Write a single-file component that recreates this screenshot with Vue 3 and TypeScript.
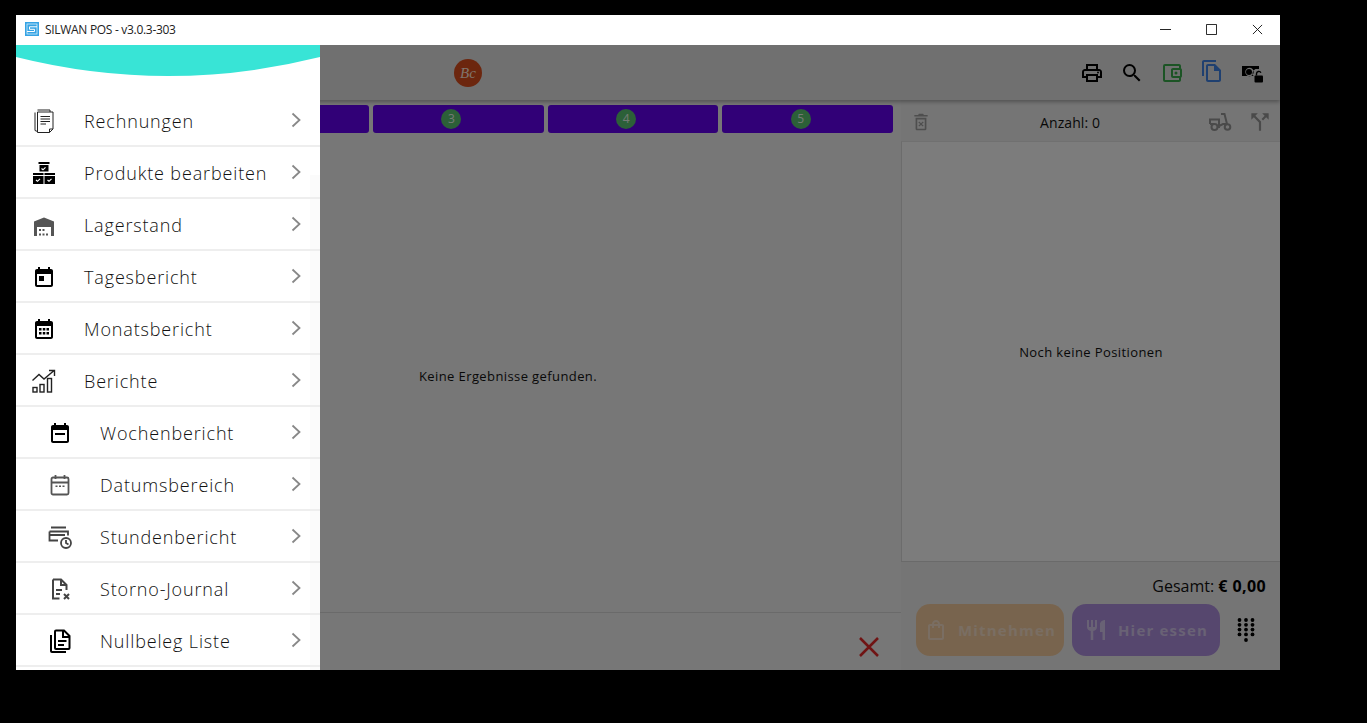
<template>
  <div class="screen">
    <div class="window">
      <!-- Titelleiste -->
      <div class="titlebar">
        <svg class="app-icon" viewBox="0 0 14 14">
          <rect width="14" height="14" fill="#35a3e4" />
          <rect x="2" y="2" width="10" height="10" fill="none" stroke="#d5eefb" stroke-width=".8" />
          <path d="M12 4.800H4.500v2.500h5v2.200H2" fill="none" stroke="#fff" stroke-width="1" />
        </svg>
        <span class="app-title">SILWAN POS - v3.0.3-303</span>
        <div class="win-controls">
          <svg viewBox="0 0 12 12"><path d="M0 6h12" /></svg>
          <svg viewBox="0 0 12 12"><path d="M.5.5h11v11H.5z" /></svg>
          <svg viewBox="0 0 12 12"><path d="m1 1 10 10M11 1 1 11" /></svg>
        </div>
      </div>

      <div class="app">
        <header class="app-header">
          <div class="logo-slot">
            <div class="logo"><span>Bc</span></div>
          </div>
          <div class="header-icons">
            <svg class="ico-24" viewBox="0 0 24 24"><path fill="#000" d="M19 8h-1V3H6v5H5c-1.66 0-3 1.34-3 3v6h4v4h12v-4h4v-6c0-1.66-1.34-3-3-3zM8 5h8v3H8V5zm8 12v2H8v-4h8v2zm2-2v-2H6v2H4v-4c0-.55.45-1 1-1h14c.55 0 1 .45 1 1v4h-2z" /><circle fill="#000" cx="18" cy="11.500" r="1" /></svg>
            <svg class="ico-24" viewBox="0 0 24 24"><path fill="#000" d="M15.500 14h-.79l-.28-.27A6.470 6.470 0 0 0 16 9.500 6.500 6.500 0 1 0 9.500 16c1.610 0 3.090-.59 4.230-1.570l.27.28v.79l5 4.990L20.490 19l-4.990-5zm-6 0C7.010 14 5 11.990 5 9.500S7.010 5 9.500 5 14 7.010 14 9.500 11.990 14 9.500 14z" /></svg>
            <svg class="ico-24" viewBox="0 0 24 24"><path fill="#38a84a" d="M21 7.280V5c0-1.100-.9-2-2-2H5a2 2 0 0 0-2 2v14a2 2 0 0 0 2 2h14c1.100 0 2-.9 2-2v-2.280A2 2 0 0 0 22 15V9a2 2 0 0 0-1-1.720zM20 9v6h-7V9h7zM5 19V5h14v2h-6c-1.100 0-2 .9-2 2v6c0 1.100.9 2 2 2h6v2H5z" /><circle fill="#38a84a" cx="16" cy="12" r="1.500" /></svg>
            <svg class="ico-24 ico-copy" viewBox="0 0 24 24"><path fill="#3f80e0" d="M16 1H4c-1.100 0-2 .9-2 2v14h2V3h12V1zm-1 4 6 6v10c0 1.100-.9 2-2 2H8c-1.100 0-2-.9-2-2V7c0-1.100.9-2 2-2h7zm-1 2H8v14h11V12h-5V7z" /></svg>
            <svg class="ico-24" viewBox="0 0 24 24">
              <path fill="#000" fill-rule="evenodd" d="M2 5h17v3h-3.500a4.500 4.500 0 0 0-2 7H2V5zm7.500 1.800a4.200 4.200 0 1 0 0 8.400 4.200 4.200 0 0 0 0-8.400z" />
              <circle fill="#000" cx="9" cy="11" r="3" />
              <rect fill="#000" x="14.500" y="14.500" width="8.500" height="7" rx="1" />
              <path fill="none" stroke="#000" stroke-width="1.400" d="M16.500 14.500v-1.800a2.300 2.300 0 0 1 4.400-.9" />
            </svg>
          </div>
        </header>

        <div class="columns">
          <section class="left">
            <div class="tabs">
              <div v-for="n in 5" :key="n" class="tab"><span class="badge">{{ n }}</span></div>
            </div>
            <div class="results">
              <div class="categories"></div>
              <div class="result-empty">Keine Ergebnisse gefunden.</div>
            </div>
            <div class="left-foot">
              <svg class="clear-x" viewBox="0 0 20 20"><path d="m1 1 18 18M19 1 1 19" /></svg>
            </div>
          </section>

          <section class="right">
            <div class="order-bar">
              <svg class="ico-trash" viewBox="0 0 24 24"><path fill="#9c9c9c" d="M15.500 3.500 14.500 2h-5l-1 1.500H4v2h16v-2h-4.500zM5.500 7v13c0 1.100.9 2 2 2h9c1.100 0 2-.9 2-2V7h-13zm2 2h9v11h-9V9zm2.300 2.500-1 1 2.200 2-2.200 2 1 1 2.200-2 2.200 2 1-1-2.200-2 2.200-2-1-1-2.200 2-2.200-2z" /></svg>
              <span class="count">Anzahl: 0</span>
              <svg class="ico-scooter" viewBox="0 0 24 24"><g fill="none" stroke="#949494" stroke-width="2"><circle cx="6.500" cy="17" r="3" /><circle cx="19.500" cy="17" r="2.800" /><path d="M2 14V9.500h9V17H9.500M2 14h4M13 4h3.500l2.500 10M11 16l4-2h4" /></g></svg>
              <svg class="ico-split" viewBox="0 0 24 24"><path fill="#949494" d="M14 4l2.290 2.290-2.880 2.880 1.420 1.420 2.880-2.880L20 10V4h-6zm-4 0H4v6l2.290-2.290 4.710 4.700V20h2v-8.410l-5.290-5.300L10 4z" /></svg>
            </div>
            <div class="positions">Noch keine Positionen</div>
            <div class="totals">
              <div class="sum">Gesamt: <b>€ 0,00</b></div>
              <div class="actions">
                <div class="action orange">
                  <svg viewBox="0 0 24 24"><path fill="currentColor" d="M18 6h-2c0-2.210-1.790-4-4-4S8 3.790 8 6H6c-1.100 0-2 .9-2 2v12c0 1.100.9 2 2 2h12c1.100 0 2-.9 2-2V8c0-1.100-.9-2-2-2zm-6-2c1.100 0 2 .9 2 2h-4c0-1.100.9-2 2-2zm6 16H6V8h2v2h2V8h4v2h2V8h2v12z" /></svg>
                  <span>Mitnehmen</span>
                </div>
                <div class="action purple">
                  <svg viewBox="0 0 24 24"><path fill="currentColor" d="M11 9H9V2H7v7H5V2H3v7c0 2.120 1.660 3.840 3.750 3.970V22h2.500v-9.030C11.340 12.840 13 11.120 13 9V2h-2v7zm5-3v8h2.500v8H21V2c-2.760 0-5 2.240-5 4z" /></svg>
                  <span>Hier essen</span>
                </div>
                <svg class="dialpad" viewBox="0 0 18 24">
                  <circle v-for="d in dialDots" :key="d.key" :cx="d.x" :cy="d.y" r="1.900" fill="#000" />
                </svg>
              </div>
            </div>
          </section>
        </div>

        <!-- Abdunkelung und Seitenmenü -->
        <div class="scrim"></div>
        <aside class="drawer">
          <svg class="wave" viewBox="0 0 304 32" preserveAspectRatio="none">
            <path d="M0 0h304v12Q152 50 0 12z" fill="#38e4d6" />
          </svg>
          <div class="drawer-track"></div>
          <nav class="menu">
            <div v-for="item in menu" :key="item.label" class="menu-row" :class="{ sub: item.sub }">
              <svg class="menu-icon" viewBox="0 0 24 24" v-html="item.icon"></svg>
              <span class="menu-label">{{ item.label }}</span>
              <svg class="chevron" viewBox="0 0 10 16"><path d="m1.500 1.500 7 6.500-7 6.500" /></svg>
            </div>
            <div class="menu-row"></div>
          </nav>
        </aside>
      </div>
    </div>
  </div>
</template>

<script setup lang="ts">
interface MenuItem {
  label: string
  icon: string
  sub?: boolean
}

const dialDots = Array.from({ length: 13 }, (_, i) => ({
  key: i,
  x: i === 12 ? 9 : 2.500 + (i % 3) * 6.500,
  y: i === 12 ? 22 : 2 + Math.floor(i / 3) * 4.800,
}))

const calendarBase =
  'M19 4h-1V2h-2v2H8V2H6v2H5C3.900 4 3 4.900 3 6v14c0 1.100.9 2 2 2h14c1.100 0 2-.9 2-2V6c0-1.100-.9-2-2-2zm0 16H5V9h14v11z'

const menu: MenuItem[] = [
  {
    label: 'Rechnungen',
    icon: '<g fill="none" stroke="#222" stroke-width="1"><path d="M5.500 1H18v2M3 3.500V21.500l2.500 1"/><path d="M5.500 3H21v17L17.500 23.500H5.500z"/><path d="M8.500 7.500H18M8.500 10H18M8.500 12.500H18M8.500 15h5.500" /><path d="M21 20h-3.500v3.500" /></g>',
  },
  {
    label: 'Produkte bearbeiten',
    icon: '<path fill="#000" d="M6.500 1h11v2h-11zM7.500 4h9v6.500h-9zM1 12h10.500v2H1zM12.500 12h10.500v2H12.500zM1 15h10.500v8H1zM12.500 15h10.500v8H12.500z"/><path fill="none" stroke="#fff" stroke-width="1.200" d="m9.500 7.500 1.500 1.300 2.500-2.500M4 19l1.500 1.300 2.500-2.500M15.500 19l1.500 1.300 2.500-2.500"/>',
  },
  {
    label: 'Lagerstand',
    icon: '<path fill="#555" d="M12 4.500 2 8.500V23h3V14h14v9h3V8.500z"/><path fill="#555" d="M7 16h2v2H7zM10.500 16h2v2h-2zM7 20.500h2v2H7zM10.500 20.500h2v2h-2zM14 20.500h2v2h-2z"/>',
  },
  {
    label: 'Tagesbericht',
    icon: `<path fill="#000" d="${calendarBase}"/><path fill="#000" d="M7 11h5v5H7z"/>`,
  },
  {
    label: 'Monatsbericht',
    icon: `<path fill="#000" d="${calendarBase}"/><path fill="#000" d="M7 11h2.500v2.500H7zM10.800 11h2.500v2.500h-2.500zM14.500 11H17v2.500h-2.500zM7 15h2.500v2.500H7zM10.800 15h2.500v2.500h-2.500zM14.500 15H17v2.500h-2.500z"/>`,
  },
  {
    label: 'Berichte',
    icon: '<g fill="none" stroke="#222" stroke-width="1.400"><path d="M.5 11.500 7 5.500l5 4.500L21.500 2M17 1.500h5.500V7" /><rect x="1" y="18.500" width="4" height="4.500"/><rect x="8" y="15.500" width="4" height="7.500"/><rect x="15.500" y="9.500" width="4" height="13.500" /></g>',
  },
  {
    label: 'Wochenbericht',
    sub: true,
    icon: `<path fill="#000" d="${calendarBase}"/><path fill="#000" d="M7 12h10v2H7z"/>`,
  },
  {
    label: 'Datumsbereich',
    sub: true,
    icon: '<g fill="none" stroke="#555" stroke-width="1.800"><rect x="3.500" y="4.500" width="17" height="17" rx="1.500"/><path d="M3.500 9.500h17M7.500 2v4M16.500 2v4"/></g><path fill="#555" d="M7.500 12.500h2v1.500h-2zM11 12.500h2v1.500h-2zM14.500 12.500h2v1.500h-2z"/>',
  },
  {
    label: 'Stundenbericht',
    sub: true,
    icon: '<g fill="none" stroke="#444" stroke-width="1.800"><path d="M3 2.500h15M1.500 6.500H20v4M1.500 6.500v9H10M1.500 10H17"/><circle cx="18" cy="18" r="5"/><path d="M18 15v3l2.500 1.500"/></g>',
  },
  {
    label: 'Storno-Journal',
    sub: true,
    icon: '<path fill="none" stroke="#444" stroke-width="2" d="M5 2.500h8l5.500 5.500v5M5 2.500v19h6.500M13 2.500V8h5.500M8 13h6M8 17h4"/><path fill="none" stroke="#444" stroke-width="2" d="m16 17 5 5M21 17l-5 5"/>',
  },
  {
    label: 'Nullbeleg Liste',
    sub: true,
    icon: '<path fill="#000" d="M2 6h2v16h14v2H4a2 2 0 0 1-2-2z"/><path fill="none" stroke="#000" stroke-width="2" d="M8 1.500h8l5.500 5.500v12a1 1 0 0 1-1 1H8a1 1 0 0 1-1-1V2.500a1 1 0 0 1 1-1zM10 12h8.500M10 16h6M15 1.500V8h6.500"/>',
  },
]
</script>

<style>
html,
body {
  margin: 0;
  background: #000;
}
</style>

<style scoped>
.screen {
  width: 1367px;
  height: 723px;
  box-sizing: border-box;
  padding: 15px 0 0 16px;
  background: #000;
  overflow: hidden;
  font-family: "Open Sans", "Noto Sans", sans-serif;
}

.window {
  width: 1264px;
  height: 655px;
  display: flex;
  flex-direction: column;
  background: #fff;
}

.titlebar {
  height: 30px;
  flex: none;
  box-sizing: border-box;
  padding: 0 0 2px 9px;
  display: flex;
  align-items: center;
  background: #fff;
}

.app-icon {
  width: 14px;
  height: 14px;
  margin-right: 6px;
}

.app-title {
  font-size: 12px;
  letter-spacing: -0.3px;
  color: #222;
}

.win-controls {
  margin-left: auto;
  display: flex;
  height: 100%;
  align-items: center;
  gap: 35px;
  padding-right: 17px;
}

.win-controls svg {
  width: 11px;
  height: 11px;
  fill: none;
  stroke: #111;
  stroke-width: 1;
}

.app {
  position: relative;
  flex: 1;
  min-height: 0;
  display: flex;
  flex-direction: column;
  background: #f6f6f6;
  overflow: hidden;
}

.app-header {
  height: 55px;
  flex: none;
  display: flex;
  align-items: center;
  background: #e0e0e0;
  box-shadow: 0 2px 4px rgba(0, 0, 0, 0.3);
  position: relative;
  z-index: 1;
}

.logo-slot {
  margin-left: 438px;
  margin-top: 1px;
}

.logo {
  width: 28px;
  height: 28px;
  border-radius: 50%;
  background: #d84c1c;
  display: flex;
  align-items: center;
  justify-content: center;
}

.logo span {
  font-family: "Liberation Serif", serif;
  font-style: italic;
  font-size: 15px;
  color: #ffe8da;
}

.header-icons {
  margin-left: auto;
  display: flex;
  align-items: center;
  gap: 16px;
  padding-right: 16px;
}

.ico-24 {
  width: 24px;
  height: 24px;
}

.ico-copy {
  margin-top: -3px;
}

.columns {
  flex: 1;
  min-height: 0;
  display: flex;
}

.left {
  width: 885px;
  flex: none;
  display: flex;
  flex-direction: column;
  background: #eeeeee;
}

.tabs {
  display: flex;
  gap: 4px;
  padding: 5px 8px 0;
}

.tab {
  flex: 1;
  height: 28px;
  box-sizing: border-box;
  padding-right: 14px;
  border-radius: 3px;
  background: #6200ee;
  display: flex;
  align-items: center;
  justify-content: center;
}

.badge {
  width: 20px;
  height: 20px;
  border-radius: 50%;
  background: #58c070;
  color: #e8f5ea;
  font-size: 12px;
  line-height: 20px;
  text-align: center;
}

.results {
  flex: 1;
  min-height: 0;
  display: flex;
  margin-top: 4px;
  border-bottom: 1px solid #d4d4d4;
}

.categories {
  width: 99px;
  flex: none;
}

.result-empty {
  flex: 1;
  display: flex;
  align-items: center;
  justify-content: center;
  padding-top: 3px;
  font-size: 13px;
  letter-spacing: 0.4px;
  color: #111;
}

.left-foot {
  height: 57px;
  flex: none;
  display: flex;
  justify-content: flex-end;
  align-items: flex-start;
  padding: 24px 22px 0 0;
  box-sizing: border-box;
}

.clear-x {
  width: 20px;
  height: 20px;
  fill: none;
  stroke: #e02828;
  stroke-width: 2.500;
}

.right {
  flex: 1;
  min-width: 0;
  display: flex;
  flex-direction: column;
  background: #ebebeb;
}

.order-bar {
  height: 41px;
  flex: none;
  box-sizing: border-box;
  padding-top: 3px;
  display: flex;
  align-items: center;
}

.ico-trash {
  width: 20px;
  height: 20px;
  margin-left: 10px;
}

.count {
  margin-left: 109px;
  font-size: 14px;
  letter-spacing: 0.1px;
  color: #111;
}

.ico-scooter {
  width: 24px;
  height: 24px;
  margin-left: 108px;
}

.ico-split {
  width: 26px;
  height: 26px;
  margin-left: 15px;
}

.positions {
  flex: 1;
  min-height: 0;
  display: flex;
  align-items: center;
  justify-content: center;
  border-left: 1px solid #d8d8d8;
  border-top: 1px solid #e0e0e0;
  font-size: 13px;
  letter-spacing: 0.4px;
  color: #111;
  background: #f8f8f8;
}

.totals {
  height: 109px;
  flex: none;
  box-sizing: border-box;
  border-top: 1px solid #d4d4d4;
  padding: 13px 14px 0 15px;
}

.sum {
  text-align: right;
  font-size: 16px;
  line-height: 22px;
  color: #111;
}

.sum b {
  color: #000;
  letter-spacing: 0.4px;
}

.actions {
  margin-top: 7px;
  display: flex;
  align-items: center;
  gap: 8px;
}

.action {
  width: 148px;
  height: 52px;
  border-radius: 14px;
  display: flex;
  align-items: center;
  justify-content: center;
  gap: 10px;
  font-size: 15px;
  font-weight: 700;
  letter-spacing: 1.2px;
}

.action svg {
  width: 24px;
  height: 24px;
  flex: none;
}

.orange {
  background: #f0c99d;
  color: #f4ddc6;
}

.purple {
  background: #ad8fdc;
  color: #d2c4ea;
}

.dialpad {
  width: 18px;
  height: 24px;
  margin-left: 9px;
}

.scrim {
  position: absolute;
  inset: 0;
  background: rgba(0, 0, 0, 0.5);
  z-index: 2;
}

.drawer {
  position: absolute;
  left: 0;
  top: 0;
  bottom: 0;
  width: 304px;
  background: #fff;
  overflow: hidden;
  z-index: 3;
}

.wave {
  display: block;
  width: 304px;
  height: 32px;
}

.drawer-track {
  position: absolute;
  right: 0;
  top: 130px;
  bottom: 0;
  width: 10px;
  background: #fbfbfb;
}

.menu {
  position: relative;
  padding-top: 18px;
}

.menu-row {
  height: 52px;
  box-sizing: border-box;
  border-bottom: 2px solid #eeeeee;
  display: flex;
  align-items: center;
  padding: 2px 0 0 16px;
}

.menu-row.sub {
  padding-left: 32px;
}

.menu-icon {
  width: 24px;
  height: 24px;
  flex: none;
  margin-right: 28px;
}

.menu-label {
  font-size: 18px;
  letter-spacing: 0.85px;
  font-weight: 300;
  color: #111;
}

.chevron {
  width: 10px;
  height: 16px;
  margin-left: auto;
  margin-right: 19px;
  margin-top: -2px;
  fill: none;
  stroke: #888;
  stroke-width: 1.800;
}
</style>
